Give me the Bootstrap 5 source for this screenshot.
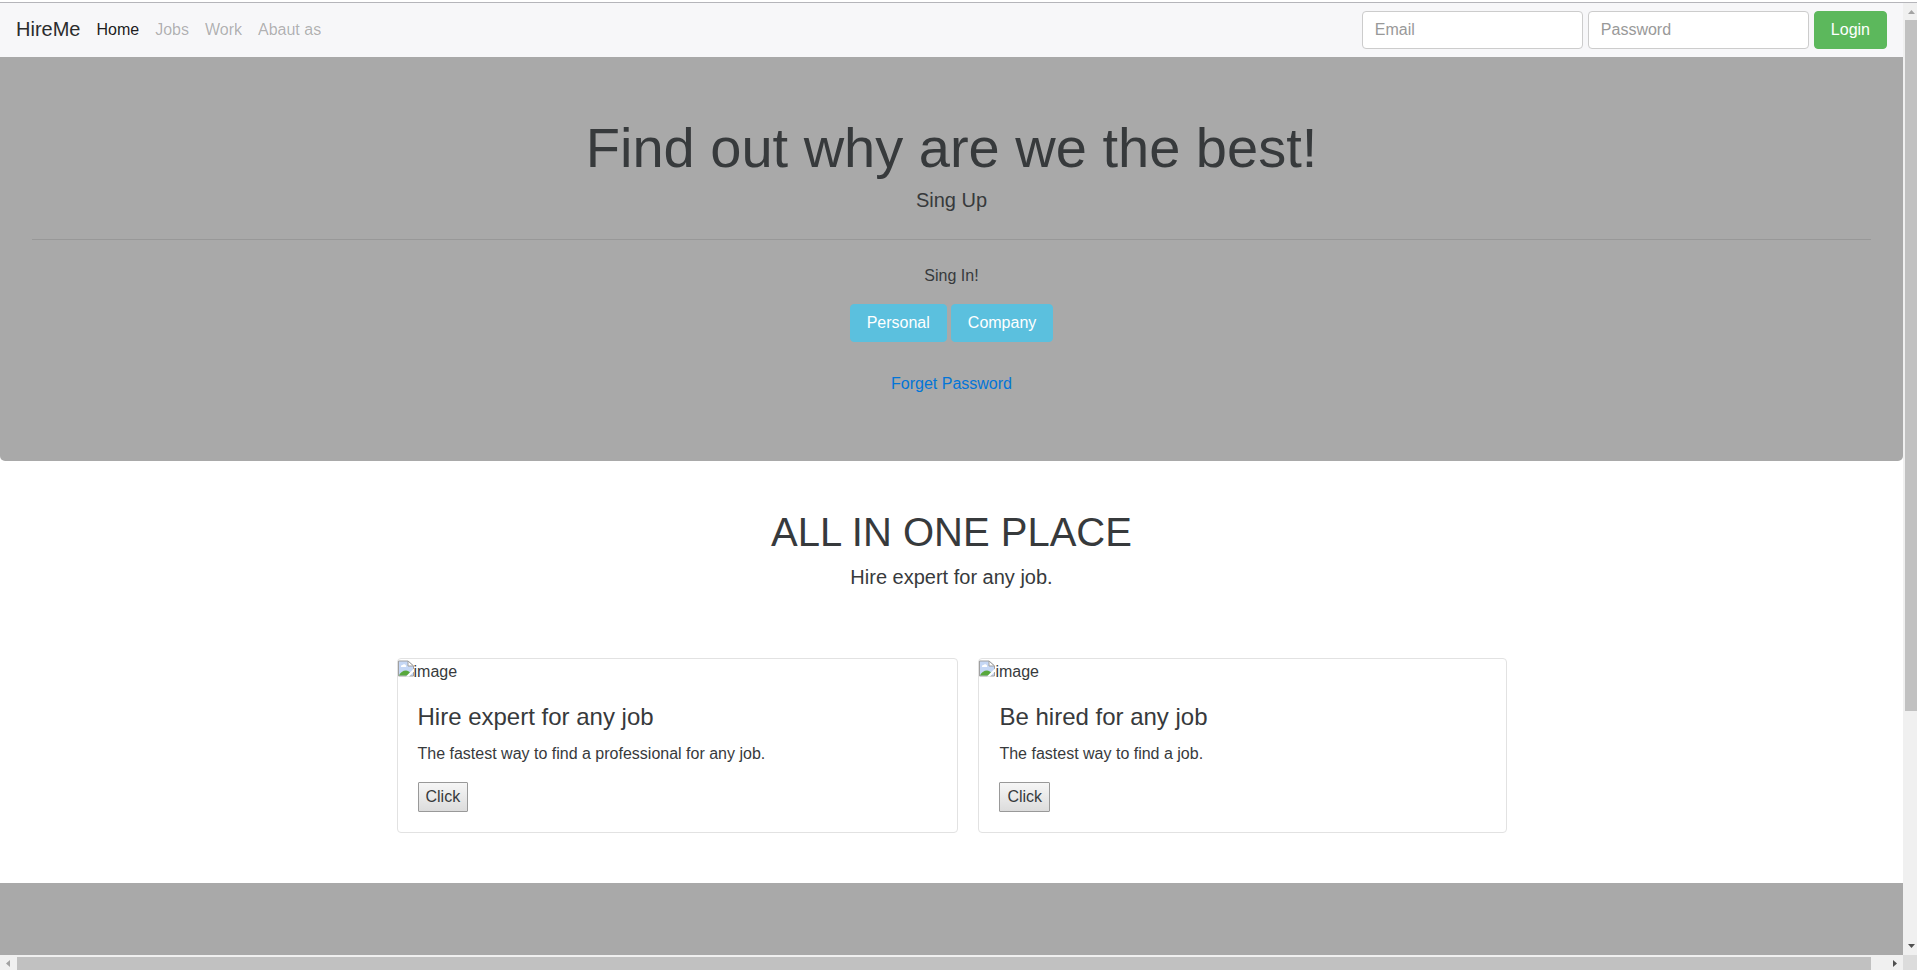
<!DOCTYPE html>
<html lang="en">
<head>
<meta charset="utf-8">
<meta name="viewport" content="width=device-width, initial-scale=1">
<title>HireMe</title>
<link href="https://cdn.jsdelivr.net/npm/bootstrap@5.3.0/dist/css/bootstrap.min.css" rel="stylesheet">
<style>
body { font-family: "Liberation Sans", Arial, sans-serif; color: #373a3c; background: #fff; }
h1, h2, h3 { font-weight: 400; line-height: 1.1; }
/* window frame: page, its two scroll bars and the corner */
.window-edge { padding-top: 2px; height: 100vh; overflow: hidden; background: #fff; }
.frame { height: 100%; display: grid; grid-template: minmax(0, 1fr) 15px / minmax(0, 1fr) 14px; border-top: 1px solid #b5b5ba; }
.bar { background: #f0f0f0; }
.bar svg { display: block; flex: none; }
.thumb { background: #c1c1c1; }
.bar-corner { background: #dcdcdc; }
.topbar { background: #f7f7f9; padding: 8px 16px; --bs-navbar-brand-margin-end: 16px; }
.topbar .navbar-brand { font-size: 20px; line-height: 30px; padding: 0 0 2px; color: #2b2c2d; }
.topbar .navbar-nav .nav-link { padding: 0; line-height: 24px; color: rgba(0,0,0,.3); }
.topbar .navbar-nav .nav-link.active { color: rgba(0,0,0,.9); }
.topbar form { gap: 5px; }
.topbar .form-control { width: 221px; border-color: #ccc; border-radius: 4px; }
.topbar .form-control::placeholder { color: #999; }
.btn { --bs-btn-padding-x: 16px; --bs-btn-border-radius: 4px; }
.btn-success { --bs-btn-bg: #5cb85c; --bs-btn-border-color: #5cb85c; }
.btn-info { --bs-btn-bg: #5bc0de; --bs-btn-border-color: #5bc0de; --bs-btn-color: #fff; }
.hero { background: #a9a9a9; padding: 61px 32px 65px; border-radius: 0 0 5px 5px; }
.hero h1 { font-size: 56px; line-height: 60px; margin-bottom: 7px; }
.hero hr { margin: 24px 0; opacity: 1; border-color: #989898; }
.hero a { color: #0275d8; }
.forgot { margin: 30px 0 0; }
.intro { font-size: 20px; line-height: 30px; }
.about { padding: 49px 0 50px; }
.about h2 { font-size: 40px; }
.about .container { max-width: 1110px; }
.cards { gap: 20px; margin-top: 66px; }
.job { border-color: #e2e2e2; border-radius: 4px; color: inherit; flex: 528 1 0; min-width: 0; }
.job.wide { flex-grow: 562; }
.job .card-body { padding: 20px; color: inherit; }
.job h3 { font-size: 24px; margin-bottom: 12px; }
.missing { padding-top: 1px; }
.click { display: block; margin-top: 16px; padding: 2px 7px; line-height: 24px; color: inherit; border: 1px solid #999; border-radius: 1px; background: linear-gradient(#f6f6f6, #dcdcdc); }
.band { background: #a9a9a9; height: 100vh; }
</style>
</head>
<body>
<svg class="d-none" aria-hidden="true">
  <symbol id="broken" viewBox="0 0 16 16">
    <path d="M.5.5h9.500l5.500 5v10H.5z" fill="#c5d7f5" stroke="#a0a0a0"/>
    <path d="M3 6.500a1.500 1.500 0 0 1 1.500-2 2 2 0 0 1 3.500.5 1.200 1.200 0 0 1 0 1.500z" fill="#fff"/>
    <path d="M1 15c1-3 4-5 7-5 2 0 3 1 4 2l-3 3z" fill="#58a83c"/>
    <path d="M10 .5v5h5.500z" fill="#fff" stroke="#a0a0a0"/>
    <path d="M16 8v3l-5 5H8z" fill="#fff"/>
  </symbol>
</svg>
<div class="window-edge">
<div class="frame">
  <div class="overflow-hidden">
    <nav class="navbar navbar-expand topbar">
      <a class="navbar-brand" href="#">HireMe</a>
      <div class="navbar-nav me-auto gap-3">
        <a class="nav-link active" href="#">Home</a>
        <a class="nav-link" href="#">Jobs</a>
        <a class="nav-link" href="#">Work</a>
        <a class="nav-link" href="#">Abaut as</a>
      </div>
      <form class="d-flex">
        <input class="form-control" type="email" placeholder="Email" aria-label="Email">
        <input class="form-control" type="password" placeholder="Password" aria-label="Password">
        <button class="btn btn-success" type="button">Login</button>
      </form>
    </nav>
    <header class="hero text-center">
      <h1>Find out why are we the best!</h1>
      <p class="intro mb-0">Sing Up</p>
      <hr>
      <p class="mb-3">Sing In!</p>
      <div class="d-flex justify-content-center gap-1">
        <button class="btn btn-info" type="button">Personal</button>
        <button class="btn btn-info" type="button">Company</button>
      </div>
      <p class="forgot"><a class="text-decoration-none" href="#">Forget Password</a></p>
    </header>
    <main class="about">
      <div class="container p-0">
        <h2 class="mb-2 text-center">ALL IN ONE PLACE</h2>
        <p class="intro mb-0 text-center">Hire expert for any job.</p>
        <div class="d-flex cards">
          <article class="card job wide">
            <div class="missing d-flex"><svg width="16" height="17"><use href="#broken"/></svg><span>image</span></div>
            <div class="card-body">
              <h3>Hire expert for any job</h3>
              <p class="mb-0">The fastest way to find a professional for any job.</p>
              <button class="click" type="button">Click</button>
            </div>
          </article>
          <article class="card job">
            <div class="missing d-flex"><svg width="16" height="17"><use href="#broken"/></svg><span>image</span></div>
            <div class="card-body">
              <h3>Be hired for any job</h3>
              <p class="mb-0">The fastest way to find a job.</p>
              <button class="click" type="button">Click</button>
            </div>
          </article>
        </div>
      </div>
    </main>
    <footer class="band"></footer>
  </div>
  <div class="bar d-flex flex-column" aria-hidden="true">
    <svg width="14" height="17"><path d="M5 11h7L8.500 7z" fill="#a3a3a3"/></svg>
    <div class="thumb ms-auto" style="height:72.600%;width:12px"></div>
    <svg class="mt-auto" width="14" height="17"><path d="M5 6h7l-3.500 4z" fill="#505050"/></svg>
  </div>
  <div class="bar d-flex" aria-hidden="true">
    <svg width="17" height="15"><path d="M10 5v7L6 8.500z" fill="#a3a3a3"/></svg>
    <div class="thumb mt-auto" style="width:97.400%;height:13px"></div>
    <svg class="ms-auto" width="17" height="15"><path d="M7 5v7l4-3.500z" fill="#505050"/></svg>
  </div>
  <div class="bar-corner"></div>
</div>
</div>
<script src="https://cdn.jsdelivr.net/npm/bootstrap@5.3.0/dist/js/bootstrap.bundle.min.js"></script>
</body>
</html>
